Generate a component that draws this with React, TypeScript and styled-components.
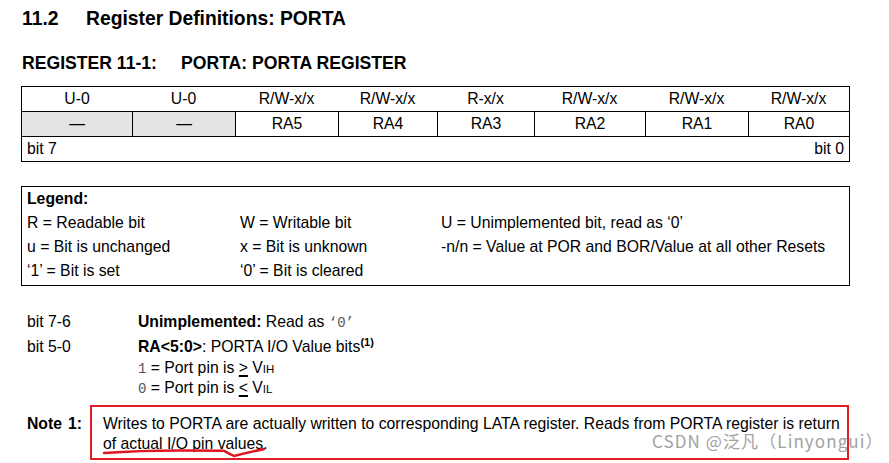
import styled, { createGlobalStyle } from "styled-components";

const GlobalStyle = createGlobalStyle`
  html, body {
    margin: 0;
    padding: 0;
    background: #fff;
  }
  body {
    font-family: "Liberation Sans", Arial, sans-serif;
    color: #000;
  }
`;

const Page = styled.div`
  position: relative;
  width: 889px;
  height: 463px;
  overflow: hidden;
  box-sizing: border-box;
  padding: 7px 0 0 21px;
`;

const SectionTitle = styled.h1`
  margin: 0;
  padding-left: 1px;
  font-size: 19.3px;
  font-weight: bold;
  line-height: 24px;
  white-space: nowrap;
`;

const RegisterTitle = styled.h2`
  margin: 20px 0 0;
  padding-left: 1px;
  font-size: 17.6px;
  font-weight: bold;
  line-height: 24px;
  white-space: nowrap;
`;

const Lead = styled.span<{ $w: number }>`
  display: inline-block;
  width: ${(p) => p.$w}px;
`;

const Table = styled.div`
  margin-top: 11px;
  width: 829px;
  box-sizing: border-box;
  border: 1px solid #000;
  font-size: 15.75px;
  line-height: 24px;
`;

const GridRow = styled.div`
  display: grid;
  grid-template-columns: 110px 103px 103px 99px 97px 111px 103px 101px;
  height: 25px;
  box-sizing: border-box;
  border-bottom: 1px solid #000;
`;

const Cell = styled.div<{ $shaded?: boolean; $divider?: boolean }>`
  text-align: center;
  white-space: nowrap;
  background: ${(p) => (p.$shaded ? "#e4e4e4" : "transparent")};
  border-left: ${(p) => (p.$divider ? "1px solid #000" : "none")};
`;

const BitFoot = styled.div`
  display: flex;
  justify-content: space-between;
  height: 24px;
  padding: 0 5px;
`;

const LegendBox = styled.div`
  margin-top: 24px;
  width: 829px;
  box-sizing: border-box;
  border: 1px solid #000;
  padding: 0 5px 2px;
  display: grid;
  grid-template-columns: 213px 201px 1fr;
  font-size: 15.75px;
  line-height: 24px;
  white-space: nowrap;
`;

const LegendHead = styled.div`
  grid-column: 1 / -1;
  font-weight: bold;
`;

const Bits = styled.div`
  margin-top: 24px;
  padding-left: 6px;
  display: grid;
  grid-template-columns: 111px 1fr;
  font-size: 15.75px;
  line-height: 24px;
  white-space: nowrap;
`;

const SubLine = styled.div`
  line-height: 18.5px;
`;

const Mono = styled.span`
  font-family: "Liberation Mono", "Courier New", monospace;
  font-size: 14px;
  color: #555;
`;

const Sup = styled.sup`
  font-size: 11px;
  font-weight: bold;
  vertical-align: 6px;
  line-height: 0;
`;

const Small = styled.span`
  font-size: 11.5px;
`;

const Cmp = styled.span`
  text-decoration: underline;
  text-decoration-thickness: 2px;
  text-underline-offset: 2px;
`;

const NoteRow = styled.div`
  margin-top: 7px;
  padding-left: 6px;
  display: flex;
  align-items: flex-start;
  font-size: 15.75px;
  line-height: 20px;
  white-space: nowrap;
`;

const NoteLabel = styled.div`
  width: 63px;
  margin-top: 8.5px;
  font-weight: bold;
  span {
    margin-left: 6px;
  }
`;

const NoteBox = styled.div`
  width: 759px;
  box-sizing: border-box;
  border: 2px solid #e31d25;
  padding: 6.5px 0 4px 11px;
`;

const Squiggle = styled.svg`
  position: absolute;
  left: 100px;
  top: 446px;
`;

const Watermark = styled.div`
  position: absolute;
  left: 652px;
  top: 431px;
  font-family: "Noto Sans CJK SC", "Noto Sans", sans-serif;
  font-size: 17px;
  letter-spacing: 1.1px;
  line-height: 20px;
  color: #a2a2a2;
  white-space: nowrap;
`;

const access = ["U-0", "U-0", "R/W-x/x", "R/W-x/x", "R-x/x", "R/W-x/x", "R/W-x/x", "R/W-x/x"];
const names = ["\u2014", "\u2014", "RA5", "RA4", "RA3", "RA2", "RA1", "RA0"];

const legend = [
  "R = Readable bit",
  "W = Writable bit",
  "U = Unimplemented bit, read as \u20180\u2019",
  "u = Bit is unchanged",
  "x = Bit is unknown",
  "-n/n = Value at POR and BOR/Value at all other Resets",
  "\u20181\u2019 = Bit is set",
  "\u20180\u2019 = Bit is cleared",
  "",
];

export default function App() {
  return (
    <>
      <GlobalStyle />
      <Page>
        <SectionTitle>
          <Lead $w={64}>11.2</Lead>Register Definitions: PORTA
        </SectionTitle>
        <RegisterTitle>
          <Lead $w={159}>REGISTER 11-1:</Lead>PORTA: PORTA REGISTER
        </RegisterTitle>

        <Table>
          <GridRow>
            {access.map((a, i) => (
              <Cell key={i}>{a}</Cell>
            ))}
          </GridRow>
          <GridRow>
            {names.map((n, i) => (
              <Cell key={i} $shaded={i < 2} $divider={i > 0}>
                {n}
              </Cell>
            ))}
          </GridRow>
          <BitFoot>
            <span>bit 7</span>
            <span>bit 0</span>
          </BitFoot>
        </Table>

        <LegendBox>
          <LegendHead>Legend:</LegendHead>
          {legend.map((l, i) => (
            <div key={i}>{l}</div>
          ))}
        </LegendBox>

        <Bits>
          <div>bit 7-6</div>
          <div>
            <b>Unimplemented:</b> Read as <Mono>{"\u20180\u2019"}</Mono>
          </div>
          <div>bit 5-0</div>
          <div>
            <div>
              <b>RA&lt;5:0&gt;</b>: PORTA I/O Value bits<Sup>(1)</Sup>
            </div>
            <SubLine>
              <Mono>1</Mono> = Port pin is <Cmp>&gt;</Cmp> V<Small>IH</Small>
            </SubLine>
            <SubLine>
              <Mono>0</Mono> = Port pin is <Cmp>&lt;</Cmp> V<Small>IL</Small>
            </SubLine>
          </div>
        </Bits>

        <NoteRow>
          <NoteLabel>
            Note<span>1:</span>
          </NoteLabel>
          <NoteBox>
            Writes to PORTA are actually written to corresponding LATA register. Reads from PORTA register is return
            <br />
            of actual I/O pin values.
          </NoteBox>
        </NoteRow>

        <Squiggle width="170" height="14" viewBox="0 0 170 14">
          <path
            d="M4 7 Q40 4.5 80 4.5 L124 4.8 Q129 7.5 134 10 Q148 6.5 164 3"
            fill="none"
            stroke="#e0161e"
            strokeWidth="2.5"
            strokeLinecap="round"
            strokeLinejoin="round"
          />
        </Squiggle>

        <Watermark>CSDN @泛凡（Linyongui）</Watermark>
      </Page>
    </>
  );
}
